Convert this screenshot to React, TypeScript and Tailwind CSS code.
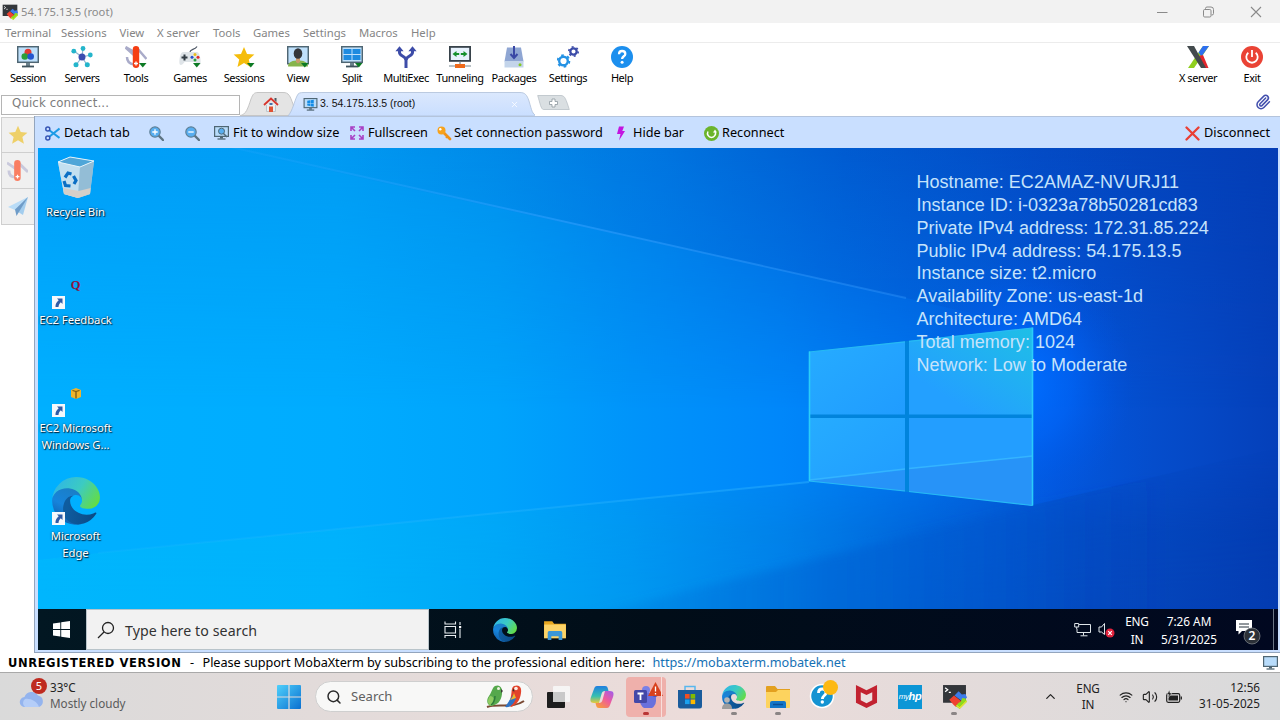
import React from "react";
import { X, Search, Wifi, Volume2, ChevronUp, Paperclip } from "lucide-react";

/* ---------- shared marks ---------- */

function EdgeLogo({ id, className }: { id: string; className: string }) {
  return (
    <svg viewBox="4 5 257 257" className={className}>
      <defs>
        <linearGradient id={id + "a"} x1="0.1" y1="0.5" x2="1" y2="0.6">
          <stop offset="0" stopColor="#0f5c9f" />
          <stop offset="1" stopColor="#0b4a86" />
        </linearGradient>
        <linearGradient id={id + "b"} x1="0.7" y1="0.1" x2="0.3" y2="1">
          <stop offset="0" stopColor="#1b7ec6" />
          <stop offset="0.5" stopColor="#1684dc" />
          <stop offset="1" stopColor="#0f5ca8" />
        </linearGradient>
        <linearGradient id={id + "c"} x1="0" y1="0.3" x2="1" y2="0.75">
          <stop offset="0" stopColor="#2fb6e6" />
          <stop offset="0.5" stopColor="#3ccbc2" />
          <stop offset="1" stopColor="#66dd3e" />
        </linearGradient>
      </defs>
      <path fill={"url(#" + id + "b)"} d="M110.34 246.34A79.2 79.2 0 0 1 87.6 225a80.72 80.72 0 0 1 29.53-120c3.12-1.47 8.45-4.13 15.54-4a32.35 32.35 0 0 1 25.69 13 31.88 31.88 0 0 1 6.36 18.66c0-.21 24.46-79.6-80-79.6-43.9 0-80 41.66-80 78.21a130.15 130.15 0 0 0 12.11 56 128 128 0 0 0 156.38 67.11 75.55 75.55 0 0 1-62.78-8z" />
      <path fill={"url(#" + id + "a)"} d="M235.68 195.46a93.73 93.73 0 0 1-10.54 4.71 101.87 101.87 0 0 1-35.9 6.46c-47.32 0-88.54-32.55-88.54-74.32A31.48 31.48 0 0 1 117.13 105c-42.8 1.8-53.8 46.4-53.8 72.53 0 73.88 68.09 81.37 82.76 81.37 7.91 0 19.84-2.3 27-4.56l1.31-.44a128.34 128.34 0 0 0 66.6-52.8 4 4 0 0 0-5.32-5.64z" />
      <path fill={"url(#" + id + "c)"} d="M156.94 153.78c-.81 1.05-3.3 2.5-3.3 5.66 0 2.61 1.7 5.12 4.72 7.23 14.38 10 41.49 8.68 41.56 8.68a59.56 59.56 0 0 0 30.27-8.35 61.38 61.38 0 0 0 30.43-52.88c.26-22.41-8-37.31-11.34-43.91C228.09 28.76 182.35 5 132.61 5a128 128 0 0 0-128 126.2c.48-36.54 36.8-66.05 80-66.05 3.5 0 23.46.34 42 10.07 16.34 8.58 24.9 18.94 30.85 29.21 6.18 10.67 7.28 24.15 7.28 29.52s-2.74 13.33-7.8 19.83z" />
    </svg>
  );
}

function MobaLogo({ className }: { className: string }) {
  return (
    <svg viewBox="0 0 24 24" className={className}>
      <rect x="1" y="1" width="22" height="17" fill="#33363a" />
      <path d="M3 3.5l2.5 2L3 7.5M6.5 8h2" stroke="#fff" strokeWidth="1.2" fill="none" />
      <path d="M12 11l4-4 3 3 3.500-.5 1.500 3.500-4 4z" fill="#3c7bea" />
      <path d="M7 15l4.500-4 3 2.500 4 3-5 5.500-2.500-2z" fill="#ef4130" />
      <path d="M13 21l3-3 2-1 1.500-3.500 3 .5 1.500 3-7 7z" fill="#8edb1c" />
      <path d="M14 20.500l3 2.500 6.500-6.500" stroke="#f0e23a" strokeWidth="1" fill="none" />
    </svg>
  );
}

function StarMark({ className, fill }: { className: string; fill: string }) {
  return (
    <svg viewBox="0 0 22 22" className={className}>
      <path fill={fill} d="M11 .8l3 6.900 7.400.7-5.600 4.900 1.700 7.400L11 16.900l-6.500 3.800 1.700-7.400L.6 8.400 8 7.700z" />
    </svg>
  );
}

function KnifeMark({ className, body, blade }: { className: string; body: string; blade: string }) {
  return (
    <svg viewBox="0 0 22 22" className={className}>
      <path d="M0 3l9 6M2 11c0 5 3 7 7 7M12 3l10 9.500" stroke={blade} strokeWidth="3" fill="none" />
      <rect x="7.500" y="0" width="6.800" height="22" rx="3.400" fill={body} />
      <path d="M11 15.500v4M9 17.500h4" stroke="#fff" strokeWidth="1.300" />
    </svg>
  );
}

const Drop = () => <path d="M14 17h7.500l-3.700 4.500z" fill="#0d7a24" />;

/* ---------- MobaXterm toolbar icons ---------- */

const ic = "h-[22px] w-[22px]";

function MonitorBase() {
  return (
    <>
      <rect x=".7" y=".7" width="20.600" height="15.600" fill="#bfe0fb" stroke="#4f6673" strokeWidth="1.500" />
      <path d="M9 17h4v3H9z" fill="#6b818c" />
      <path d="M5 20.500h12" stroke="#3f535e" strokeWidth="1.800" />
    </>
  );
}

const toolIcons: Record<string, React.ReactNode> = {
  Session: (
    <svg viewBox="0 0 22 22" className={ic}>
      <MonitorBase />
      <circle cx="11" cy="6.300" r="3.500" fill="#e23a32" />
      <circle cx="7.800" cy="10.500" r="3.300" fill="#2a9f38" />
      <circle cx="13.700" cy="10.500" r="3.300" fill="#2456cf" />
    </svg>
  ),
  Servers: (
    <svg viewBox="0 0 22 22" className={ic}>
      <path d="M11 11L12 2M11 11l8.500-2M11 11l5 8M11 11l-6 8M11 11L3 5" stroke="#8fb4cf" strokeWidth="1.200" />
      <circle cx="11" cy="11" r="3.500" fill="#3c4db0" />
      <g fill="#24b5cb">
        <circle cx="12" cy="2.500" r="2.400" /><circle cx="19.300" cy="9" r="2.400" /><circle cx="16.300" cy="18.800" r="2.500" />
        <circle cx="5" cy="18.800" r="2.500" /><circle cx="2.800" cy="5.200" r="2.400" />
      </g>
    </svg>
  ),
  Tools: (
    <svg viewBox="0 0 22 22" className={ic}>
      <path d="M.5 1.500l9 8M.5 1l8 4.500M2 11c0 5 3 7 7 7.500M12 2l9.500 11" stroke="#a9abc9" strokeWidth="2.500" fill="none" />
      <rect x="7.800" y="0" width="6.400" height="22" rx="3.200" fill="#f53d12" />
      <path d="M11 15.500v4M9 17.500h4" stroke="#fff" strokeWidth="1.300" />
      <Drop />
    </svg>
  ),
  Games: (
    <svg viewBox="0 0 22 22" className={ic}>
      <path d="M11 6c0-3 5-2 7-5.500" stroke="#4b5563" strokeWidth="1.200" fill="none" />
      <path d="M4 6h14c3 0 4 9 3.500 11.500-.5 2.500-3 1.500-5-1.500h-11c-2 3-4.500 4-5 1.500C0 15 1 6 4 6z" fill="#dfe4e8" />
      <path d="M5.500 8.500v6M2.500 11.500h6" stroke="#333c44" strokeWidth="2" />
      <circle cx="16" cy="8.500" r="1.500" fill="#eabf1b" /><circle cx="13" cy="11.300" r="1.500" fill="#2350c8" />
      <circle cx="19" cy="11.300" r="1.500" fill="#e02b2b" /><circle cx="16" cy="14" r="1.500" fill="#259f3d" />
      <Drop />
    </svg>
  ),
  Stars: (
    <svg viewBox="0 0 22 22" className={ic}>
      <path fill="#f5bd0c" d="M11 1l3 6.900 7.400.7-5.600 4.900 1.700 7.400L11 17.100l-6.500 3.800 1.700-7.400L.6 8.600 8 7.900z" />
      <Drop />
    </svg>
  ),
  View: (
    <svg viewBox="0 0 22 22" className={ic}>
      <rect x=".7" y=".7" width="20.600" height="17" fill="#bfe0fb" stroke="#4f6673" strokeWidth="1.500" />
      <path d="M1 20.500c0-5 5-6 10-6s10 1 10 6z" fill="#86b44c" />
      <path d="M9 11h4v5l-2 1.500L9 16z" fill="#c99b6e" />
      <ellipse cx="11" cy="7.500" rx="4.300" ry="5.300" fill="#33363a" />
      <Drop />
    </svg>
  ),
  Split: (
    <svg viewBox="0 0 22 22" className={ic}>
      <MonitorBase />
      <path d="M2.500 3h8v5h-8zM11.500 3h8v5h-8zM2.500 9h8v5h-8zM11.500 9h8v5h-8z" fill="#1e8be0" />
      <Drop />
    </svg>
  ),
  MultiExec: (
    <svg viewBox="0 0 22 22" className={ic}>
      <path d="M4.500 3v3.500c0 4 6.500 3 6.500 8V22M17.500 3v3.500c0 4-6.500 3-6.500 8" stroke="#3d4ca8" strokeWidth="3" fill="none" />
      <path d="M.4 5.200L4.500.3 8.600 5.200zM13.400 5.200L17.500.3 21.600 5.200z" fill="#3d4ca8" />
    </svg>
  ),
  Tunneling: (
    <svg viewBox="0 0 22 22" className={ic}>
      <rect x=".9" y=".9" width="20.200" height="14" fill="#e6f1fc" stroke="#37424a" strokeWidth="1.800" />
      <path d="M3.500 8l4-3v2h2.700v2H7.500v2zM18.500 8l-4-3v2h-2.700v2h2.700v2z" fill="#14902c" />
      <path d="M11 15.500V18M0 20h22" stroke="#77858d" strokeWidth="1.200" />
      <rect x="6" y="18" width="10" height="4" fill="#ef6a1a" />
    </svg>
  ),
  Packages: (
    <svg viewBox="0 0 22 22" className={ic}>
      <path d="M4 1.500h14l2.500 14h-19z" fill="#8fa6d3" />
      <path d="M1.500 15h19v6.500h-19z" fill="#c3d4ea" />
      <path d="M11 0v11M7.500 8l3.500 4 3.500-4" stroke="#3947a5" strokeWidth="2" fill="none" />
      <circle cx="17" cy="18.800" r="1.500" fill="#86c926" />
    </svg>
  ),
  Settings: (
    <svg viewBox="0 0 22 22" className={ic}>
      <circle cx="6.500" cy="15" r="4.300" fill="none" stroke="#2492e4" strokeWidth="2.400" />
      <circle cx="6.500" cy="15" r="5.900" fill="none" stroke="#2492e4" strokeWidth="1.800" strokeDasharray="2.600 3.580" />
      <circle cx="16.500" cy="5.500" r="3.200" fill="none" stroke="#3b4ba8" strokeWidth="2.300" />
      <circle cx="16.500" cy="5.500" r="4.700" fill="none" stroke="#3b4ba8" strokeWidth="1.600" strokeDasharray="2 2.920" />
    </svg>
  ),
  Help: (
    <svg viewBox="0 0 22 22" className={ic}>
      <circle cx="11" cy="11" r="11" fill="#1c8fee" />
      <path d="M8 8.200C8 6.300 9.300 5 11.100 5s3.200 1.200 3.200 2.900c0 2.300-3.200 2.400-3.200 5" stroke="#fff" strokeWidth="2.300" fill="none" />
      <circle cx="11.100" cy="16.300" r="1.500" fill="#fff" />
    </svg>
  ),
  XServer: (
    <svg viewBox="0 0 22 22" className={ic}>
      <path d="M16 0h6L7 22H1z" fill="#8fcf1e" />
      <path d="M16 0h6l-7.500 10.500-3-4z" fill="#2e6ff0" />
      <path d="M12 10l4-1 5.500 13H17z" fill="#e3262c" />
      <path d="M0 0h7l12 22h-5z" fill="#434a4d" />
    </svg>
  ),
  Exit: (
    <svg viewBox="0 0 22 22" className={ic}>
      <circle cx="11" cy="11" r="11" fill="#ea4335" />
      <path d="M7.300 6.700a5.700 5.700 0 1 0 7.400 0M11 4v7" stroke="#fff" strokeWidth="1.800" fill="none" />
    </svg>
  ),
};

function ToolButton({ icon, label }: { icon: string; label: string }) {
  return (
    <div className="flex w-[54px] flex-col items-center">
      {toolIcons[icon]}
      <span className="mt-[2px] text-[11px] leading-4 tracking-[-0.45px] whitespace-nowrap text-black">{label}</span>
    </div>
  );
}

function MiniMonitor({ className, children }: { className: string; children?: React.ReactNode }) {
  return (
    <svg viewBox="0 0 15 14" className={className}>
      <rect x=".6" y=".6" width="13.800" height="9.800" fill="#b8dcfb" stroke="#4f6673" strokeWidth="1.200" />
      <path d="M6 11h3v1.500H6z" fill="#4f6673" />
      <path d="M3.500 13h8" stroke="#4f6673" strokeWidth="1.300" />
      {children}
    </svg>
  );
}

function ZoomMark({ plus }: { plus?: boolean }) {
  return (
    <svg viewBox="0 0 15 15" className="h-[15px] w-[15px]">
      <path d="M10 10l4 4" stroke="#5d7380" strokeWidth="2.400" strokeLinecap="round" />
      <circle cx="6" cy="6" r="5.200" fill="#58aef0" stroke="#5f8097" strokeWidth="1.200" />
      <path d={plus ? "M3.300 6h5.400M6 3.300v5.400" : "M3.300 6h5.400"} stroke="#fff" strokeWidth="1.300" />
    </svg>
  );
}

/* ---------- header ---------- */

function TitleBar() {
  return (
    <div className="flex h-[23px] items-center bg-[#f2f2f2] pl-[2px]">
      <MobaLogo className="h-4 w-4" />
      <span className="mt-[1px] ml-[3px] text-[11.2px] text-[#8a8a8a]">54.175.13.5 (root)</span>
      <div className="ml-auto flex items-center text-[#8a8a8a]">
        <svg viewBox="0 0 12 12" className="mr-[34px] h-3 w-3">
          <path d="M1 6.500h10.500" stroke="currentColor" />
        </svg>
        <svg viewBox="0 0 12 12" className="mr-[36px] h-3 w-3" fill="none" stroke="currentColor">
          <rect x="1.500" y="3.500" width="7.500" height="7.500" rx="1.200" />
          <path d="M3.500 3V2.500a1.500 1.500 0 0 1 1.500-1.500h4a2.500 2.500 0 0 1 2.500 2.500v4A1.500 1.500 0 0 1 10 9h-.5" />
        </svg>
        <svg viewBox="0 0 12 12" className="mr-[18px] h-3 w-3">
          <path d="M1 1l10 10M11 1L1 11" stroke="currentColor" strokeWidth="1.100" />
        </svg>
      </div>
    </div>
  );
}

function MenuBar() {
  const c = "whitespace-nowrap";
  return (
    <div className="flex h-5 items-center border-b border-[#ececec] bg-white pt-[2px] pl-[5px] text-[11.3px] text-[#858585]">
      <span className={c + " w-[56px]"}>Terminal</span>
      <span className={c + " w-[58.500px]"}>Sessions</span>
      <span className={c + " w-[37.500px]"}>View</span>
      <span className={c + " w-[56px]"}>X server</span>
      <span className={c + " w-[40px]"}>Tools</span>
      <span className={c + " w-[50px]"}>Games</span>
      <span className={c + " w-[56px]"}>Settings</span>
      <span className={c + " w-[52px]"}>Macros</span>
      <span className={c}>Help</span>
    </div>
  );
}

function ToolBar() {
  return (
    <div className="flex h-[49px] justify-between bg-white pr-[1px] pl-[1px] pt-[3px]">
      <div className="flex">
        <ToolButton icon="Session" label="Session" />
        <ToolButton icon="Servers" label="Servers" />
        <ToolButton icon="Tools" label="Tools" />
        <ToolButton icon="Games" label="Games" />
        <ToolButton icon="Stars" label="Sessions" />
        <ToolButton icon="View" label="View" />
        <ToolButton icon="Split" label="Split" />
        <ToolButton icon="MultiExec" label="MultiExec" />
        <ToolButton icon="Tunneling" label="Tunneling" />
        <ToolButton icon="Packages" label="Packages" />
        <ToolButton icon="Settings" label="Settings" />
        <ToolButton icon="Help" label="Help" />
      </div>
      <div className="flex">
        <ToolButton icon="XServer" label="X server" />
        <ToolButton icon="Exit" label="Exit" />
      </div>
    </div>
  );
}

function TabRow() {
  return (
    <div className="flex h-[24px] items-end bg-white">
      <div className="mb-[1px] ml-[1px] flex h-5 w-[239px] items-center self-end border border-[#b5b5b5] pb-[2px] pl-[10px] font-['DejaVu_Sans'] text-[11.8px] tracking-[0.1px] text-[#7c7c7c]">
        Quick connect...
      </div>
      <div className="relative flex h-6 w-[295px] items-center">
        <svg viewBox="0 0 295 24" className="absolute inset-0 h-6 w-[295px]">
          <defs>
            <linearGradient id="tabActive" x1="0" y1="0" x2="0" y2="1">
              <stop offset="0" stopColor="#dbe8fd" />
              <stop offset="1" stopColor="#c9deff" />
            </linearGradient>
          </defs>
          <path d="M0 23.500C6 23 8 16 11 7C13 2 14 .5 18 .5H43C49 .5 50 4 53 12L56 23.500z" fill="#e4e4e4" stroke="#c6c6c6" />
          <path d="M48 24C53 18 54 10 57 4C58 1 60 .5 64 .5H280C285 .5 287 3 289 9C292 19 292 22 297 24z" fill="url(#tabActive)" stroke="#adbfd8" strokeWidth=".8" />
        </svg>
        <svg viewBox="0 0 16 15" className="relative ml-[23px] h-[15px] w-4">
          <path d="M3 7h10v8H3z" fill="#eceff1" />
          <path d="M1 8l7-6.500L15 8" stroke="#d8342c" strokeWidth="1.800" fill="none" />
          <path d="M11.500 1h2v4l-2-2z" fill="#4b5a62" />
          <path d="M3.500 8v6.500h9V8" stroke="#b3bcc2" strokeWidth=".8" fill="none" />
          <path d="M6 9.500h4V15H6z" fill="#e05233" />
          <path d="M6.500 6h3v2h-3z" fill="#4a6fa8" />
        </svg>
        <MiniMonitor className="relative ml-[24px] h-[13px] w-[15px]">
          <path d="M4 3l3-.6v2.900H4zM7.500 2.300L11 1.800v3.500H7.500zM4 5.800h3v2.800L4 8zM7.500 5.800H11v3.600l-3.500-.6z" fill="#128be6" />
        </MiniMonitor>
        <span className="relative ml-[2px] font-['Liberation_Sans'] text-[10.5px] text-[#111]">3. 54.175.13.5 (root)</span>
        <X className="relative ml-[95px] h-[9px] w-[9px] text-white" strokeWidth={2} />
      </div>
      <svg viewBox="0 0 33 15" className="mb-[6px] ml-[2px] h-[15px] w-[33px]">
        <path d="M.7.500H24c4 0 5 4 8.300 14H6.500C4 14.500 3 8 .7.500z" fill="#dadfe2" stroke="#b9c0c6" strokeWidth=".8" />
        <path d="M15 4h3v2.500h2.500v3H18V12h-3V9.500h-2.500v-3H15z" fill="#fff" stroke="#8d989f" strokeWidth=".8" />
      </svg>
      <Paperclip className="mr-[9px] mb-[6px] ml-auto h-4 w-4 text-[#4350ae]" strokeWidth={2.300} />
    </div>
  );
}

/* ---------- session panel ---------- */

function SideStrip() {
  const cell = "flex h-9 w-[33px] items-center justify-center border-b border-l border-[#cfcfcf] bg-[#f0f0f0] pr-[1px]";
  return (
    <div className="flex w-[34px] flex-col bg-white pt-[1px] pl-[1px]">
      <div className={cell + " border-t"}><StarMark fill="#eed069" className="h-5 w-5" /></div>
      <div className={cell}><KnifeMark body="#fa7e62" blade="#c9c9dc" className="h-[21px] w-[21px]" /></div>
      <div className={cell}>
        <svg viewBox="0 0 22 22" className="h-[22px] w-[22px]">
          <path d="M1 11L21 1 8 14z" fill="#b9dcf7" />
          <path d="M8 14L21 1 16 19z" fill="#a3cdee" />
          <path d="M8 13.500L21 1 9.500 20z" fill="#6f9cc8" />
        </svg>
      </div>
    </div>
  );
}

function ActionBar() {
  return (
    <div className="flex h-8 items-center border-t border-[#b4c4dc] pt-[1px] pl-[10px] text-[12.7px] whitespace-nowrap text-black">
      <svg viewBox="0 0 15 15" className="h-[15px] w-[15px]">
        <path d="M4 4l10.500 8M4 11L14.500 2.500" stroke="#1d9be6" strokeWidth="2" />
        <circle cx="2.800" cy="3" r="2" fill="none" stroke="#3655b5" strokeWidth="1.500" />
        <circle cx="2.800" cy="12" r="2" fill="none" stroke="#3655b5" strokeWidth="1.500" />
      </svg>
      <span className="ml-[4px] w-[85px] tracking-[0.1px]">Detach tab</span>
      <ZoomMark plus />
      <span className="w-[21px]" />
      <ZoomMark />
      <span className="w-[14px]" />
      <MiniMonitor className="h-[14px] w-[15px]">
        <circle cx="7.500" cy="5.200" r="3" fill="#58aef0" stroke="#506a7a" />
        <path d="M9.500 7.500L13 11" stroke="#506a7a" strokeWidth="1.500" />
      </MiniMonitor>
      <span className="ml-[4px] w-[117px] tracking-[0.06px]">Fit to window size</span>
      <svg viewBox="0 0 14 14" className="h-[14px] w-[14px]">
        <path d="M1 5V1h4M9 1h4v4M13 9v4H9M5 13H1V9M1 1l4 4M13 1L9 5M13 13L9 9M1 13l4-4" stroke="#a93fc4" strokeWidth="1.600" fill="none" />
      </svg>
      <span className="ml-[4px] w-[69px] tracking-[-0.05px]">Fullscreen</span>
      <svg viewBox="0 0 15 15" className="h-[15px] w-[15px]">
        <path d="M6 6l7 7" stroke="#f09217" strokeWidth="2.800" strokeLinecap="round" />
        <path d="M10 10.500l-1 1.500" stroke="#f09217" strokeWidth="1.500" />
        <circle cx="4.500" cy="4.500" r="4" fill="#f6a21c" />
        <circle cx="3.300" cy="3.300" r="1.200" fill="#fff" />
      </svg>
      <span className="ml-[2px] w-[162px]">Set connection password</span>
      <svg viewBox="0 0 10 15" className="h-[15px] w-[10px]">
        <path d="M3 .5h5L6.300 5H9L3 14.500 4.500 8H1z" fill="#c315e0" />
      </svg>
      <span className="ml-[7px] w-[71px]">Hide bar</span>
      <svg viewBox="0 0 15 15" className="h-[15px] w-[15px]">
        <circle cx="7.500" cy="7.500" r="7.500" fill="#6bb42c" />
        <path d="M4 5.500a4 4 0 1 0 7 0" stroke="#fff" strokeWidth="1.500" fill="none" />
        <path d="M9 6.500l2-3 2 3z" fill="#fff" />
      </svg>
      <span className="ml-[3px]">Reconnect</span>
      <svg viewBox="0 0 15 15" className="ml-auto h-[15px] w-[15px]">
        <path d="M1.500 1.500l12 12M13.500 1.500l-12 12" stroke="#e93f34" strokeWidth="2.300" strokeLinecap="round" />
      </svg>
      <span className="mr-[10px] ml-[4px]">Disconnect</span>
    </div>
  );
}

function Wallpaper() {
  return (
    <svg viewBox="0 0 1240 461" preserveAspectRatio="none" className="absolute inset-0 h-full w-full">
      <defs>
        <linearGradient id="base" x1="0" y1="0" x2="1240" y2="0" gradientUnits="userSpaceOnUse">
          <stop offset="0" stopColor="#00b0ff" />
          <stop offset="0.240" stopColor="#00acff" />
          <stop offset="0.370" stopColor="#00a4fc" />
          <stop offset="0.480" stopColor="#0094fa" />
          <stop offset="0.600" stopColor="#0087fa" />
          <stop offset="0.720" stopColor="#0074f2" />
          <stop offset="0.820" stopColor="#0258de" />
          <stop offset="0.900" stopColor="#054dcc" />
          <stop offset="1" stopColor="#0540ba" />
        </linearGradient>
        <linearGradient id="top" x1="0" y1="0" x2="1240" y2="0" gradientUnits="userSpaceOnUse">
          <stop offset="0" stopColor="#009ff9" />
          <stop offset="0.240" stopColor="#009cf4" />
          <stop offset="0.370" stopColor="#0090ec" />
          <stop offset="0.500" stopColor="#007be4" />
          <stop offset="0.650" stopColor="#005dd2" />
          <stop offset="0.800" stopColor="#034bc4" />
          <stop offset="1" stopColor="#043db5" />
        </linearGradient>
        <linearGradient id="low" x1="0" y1="0" x2="1240" y2="0" gradientUnits="userSpaceOnUse">
          <stop offset="0" stopColor="#00b6fd" />
          <stop offset="0.240" stopColor="#00b3fb" />
          <stop offset="0.370" stopColor="#00a8f6" />
          <stop offset="0.480" stopColor="#0098f0" />
          <stop offset="0.600" stopColor="#0080e6" />
          <stop offset="0.720" stopColor="#0060d4" />
          <stop offset="0.850" stopColor="#044ac0" />
          <stop offset="1" stopColor="#033bb0" />
        </linearGradient>
        <linearGradient id="fadeDown" x1="0" y1="0" x2="0" y2="1">
          <stop offset="0" stopColor="#fff" />
          <stop offset="1" stopColor="#000" />
        </linearGradient>
        <linearGradient id="fadeUp" x1="0" y1="0" x2="0" y2="1">
          <stop offset="0" stopColor="#000" />
          <stop offset="0.500" stopColor="#ccc" />
          <stop offset="1" stopColor="#fff" />
        </linearGradient>
        <mask id="topMask"><rect width="1240" height="260" fill="url(#fadeDown)" /></mask>
        <mask id="lowMask"><rect y="300" width="1240" height="161" fill="url(#fadeUp)" /></mask>
        <linearGradient id="wedge" x1="200" y1="0" x2="1100" y2="0" gradientUnits="userSpaceOnUse">
          <stop offset="0" stopColor="#0074d8" stopOpacity="0" />
          <stop offset="0.450" stopColor="#0064d4" stopOpacity=".25" />
          <stop offset="0.750" stopColor="#0054cc" stopOpacity=".35" />
          <stop offset="1" stopColor="#0048c8" stopOpacity="0" />
        </linearGradient>
        <linearGradient id="under" x1="500" y1="0" x2="1240" y2="0" gradientUnits="userSpaceOnUse">
          <stop offset="0" stopColor="#0078dc" stopOpacity=".1" />
          <stop offset="0.400" stopColor="#0060d2" stopOpacity=".55" />
          <stop offset="0.650" stopColor="#004fc8" stopOpacity=".3" />
          <stop offset="0.850" stopColor="#0339ae" stopOpacity="0" />
        </linearGradient>
        <linearGradient id="ray1" x1="200" y1="0" x2="870" y2="0" gradientUnits="userSpaceOnUse">
          <stop offset="0" stopColor="#2aa8ff" stopOpacity=".2" />
          <stop offset="0.500" stopColor="#2fa0ff" stopOpacity=".6" />
          <stop offset="1" stopColor="#3a9cff" stopOpacity=".35" />
        </linearGradient>
        <linearGradient id="ray2" x1="60" y1="0" x2="771" y2="0" gradientUnits="userSpaceOnUse">
          <stop offset="0" stopColor="#36c0ff" stopOpacity=".1" />
          <stop offset="1" stopColor="#2fb4ff" stopOpacity=".45" />
        </linearGradient>
        <radialGradient id="flare" cx="0.500" cy="0.500" r="0.500">
          <stop offset="0" stopColor="#006eff" />
          <stop offset="0.450" stopColor="#0066fa" stopOpacity=".65" />
          <stop offset="1" stopColor="#0055e6" stopOpacity="0" />
        </radialGradient>
        <linearGradient id="paneBright" x1="0.300" y1="0.800" x2="1" y2="0">
          <stop offset="0" stopColor="#23a0ff" />
          <stop offset="1" stopColor="#1fbfe6" />
        </linearGradient>
        <linearGradient id="pane" x1="0" y1="0" x2="1" y2="1">
          <stop offset="0" stopColor="#26acff" />
          <stop offset="1" stopColor="#209cff" />
        </linearGradient>
        <filter id="soft" x="-10%" y="-10%" width="120%" height="120%"><feGaussianBlur stdDeviation="5" /></filter>
      </defs>
      <rect width="1240" height="461" fill="url(#base)" />
      <rect width="1240" height="260" fill="url(#top)" mask="url(#topMask)" />
      <path d="M188 0H1240V236L1000 181L868 150z" fill="url(#wedge)" />
      <path d="M0 412L60 405L771 334L995 357L1240 300V461H0z" fill="url(#low)" mask="url(#lowMask)" />
      <path d="M995 357L500 480H1260V300z" fill="url(#under)" filter="url(#soft)" />
      <ellipse cx="985" cy="235" rx="110" ry="125" fill="url(#flare)" />
      <path d="M188 -2L868 150" stroke="url(#ray1)" strokeWidth="1.800" />
      <path d="M60 405L771 334" stroke="url(#ray2)" strokeWidth="2" />
      <path d="M771 203.500L994.500 179.500V357.500L771 333z" fill="#0184dc" />
      <path d="M771 204L867 193.800V266.500H771z" fill="url(#pane)" />
      <path d="M871 193L994.500 180V266.500H871z" fill="url(#paneBright)" />
      <path d="M771 270H867V343L771 333z" fill="url(#pane)" />
      <path d="M871 270H994.500V357.500L871 343.500z" fill="#239eff" />
      <path d="M771 333L867 322V343zM871 321L994.500 308V357.500L871 343.500z" fill="#2a8ff5" fillOpacity=".7" />
      <path d="M771 332L867 321M871 320.500L994.500 308" stroke="#34b4ff" strokeWidth="1.500" />
      <path d="M771 204L867 193.800M871 193.300L994.500 180M771 333L867 343M871 343.500L994.500 357.500" stroke="#27b9f5" strokeWidth="1.200" />
      <path d="M771.500 203.500V333M994.500 179.500V357.500" stroke="#2bcdf8" strokeWidth="1.600" />
    </svg>
  );
}

function ShortcutArrow() {
  return (
    <svg viewBox="0 0 13 13" className="absolute bottom-0 left-0 h-[13px] w-[13px]">
      <rect width="13" height="13" fill="#f5f8fb" />
      <path d="M5 2.500h5.500V8L8.800 6.300C7 8 6.800 9 6.500 11H3.500C3.300 8 4.500 6 6.700 4.200z" fill="#2f5ba6" />
    </svg>
  );
}

function DesktopIcon({ children, shortcut, lines }: { children?: React.ReactNode; shortcut?: boolean; lines: string[] }) {
  return (
    <div className="flex h-[108px] w-[77px] flex-col items-center">
      <div className="relative flex h-[48px] w-[48px] items-center justify-center">
        {children}
        {shortcut && <ShortcutArrow />}
      </div>
      <div className="mt-[3px] text-center text-[11.3px] leading-[16.500px] tracking-[-0.05px] whitespace-nowrap text-white [text-shadow:1px_1px_1px_#00263f,0_0_2px_#003a5c]">
        {lines.map((l) => (
          <div key={l}>{l}</div>
        ))}
      </div>
    </div>
  );
}

function RecycleBin() {
  return (
    <svg viewBox="0 0 40 44" className="mt-[1px] h-[44px] w-10">
      <path d="M2 6L14 1l24 4-4 33-12 4L8 38z" fill="#a9cfe6" />
      <path d="M2 6L14 1l24 4-14 6z" fill="#4fa6d8" />
      <path d="M2 6l22 5-2 31L8 38z" fill="#c3e0f0" />
      <path d="M24 11l14-6-4 33-12 4z" fill="#93bdd6" />
      <path d="M7.200 32L22.600 35 34.600 32 34 38l-12 4L8 38z" fill="#d5cfc9" />
      <path d="M2 6L14 1l24 4-14 6z" fill="none" stroke="#e4f3fb" strokeWidth="1" />
      <g fill="none" stroke="#0b6fc4" strokeWidth="3.200">
        <path d="M9 21.500l3-4.500 3.500 1" /><path d="M17.500 20l2.500 4.500-2 3.500" /><path d="M14.500 30l-5-.5-1.500-4.500" />
      </g>
    </svg>
  );
}

const hostInfo = [
  "Hostname: EC2AMAZ-NVURJ11",
  "Instance ID: i-0323a78b50281cd83",
  "Private IPv4 address: 172.31.85.224",
  "Public IPv4 address: 54.175.13.5",
  "Instance size: t2.micro",
  "Availability Zone: us-east-1d",
  "Architecture: AMD64",
  "Total memory: 1024",
  "Network: Low to Moderate",
];

function FolderMark({ className }: { className: string }) {
  return (
    <svg viewBox="0 0 24 22" className={className}>
      <path d="M0 1.500h9l2 2.500h13v16H0z" fill="#e9a820" />
      <path d="M0 5h24v15H0z" fill="#fdd468" />
      <path d="M4 22v-8c0-1.500 1-2 2-2h12c1 0 2 .5 2 2v8h-4v-4H8v4z" fill="#3b97d8" />
    </svg>
  );
}

function RemoteDesktop() {
  return (
    <div className="relative h-[461px] overflow-hidden">
      <Wallpaper />
      <div className="relative flex h-full justify-between">
        <div className="-ml-[1px] flex flex-col pt-[5px]">
          <DesktopIcon lines={["Recycle Bin"]}><RecycleBin /></DesktopIcon>
          <DesktopIcon shortcut lines={["EC2 Feedback"]}>
            <span className="font-['Liberation_Serif'] text-[12.500px] leading-none font-bold text-[#8b1442]">Q</span>
          </DesktopIcon>
          <DesktopIcon shortcut lines={["EC2 Microsoft", "Windows G..."]}>
            <svg viewBox="0 0 10 11" className="h-[11px] w-[10px]">
              <path d="M0 2l5-2 5 2v7l-5 2-5-2z" fill="#f0b429" />
              <path d="M1.500 2.500L5 3.500l3.500-1M5 3.500v7" stroke="#6f5416" strokeWidth="1.200" fill="none" />
            </svg>
          </DesktopIcon>
          <DesktopIcon shortcut lines={["Microsoft", "Edge"]}><EdgeLogo id="desk" className="h-12 w-12" /></DesktopIcon>
        </div>
        <div className="w-[361.500px] pt-[23px] font-['Liberation_Sans'] text-[18px] leading-[22.850px] tracking-[0.03px] whitespace-nowrap text-[#c6e3fb]">
          {hostInfo.map((l) => (
            <div key={l}>{l}</div>
          ))}
        </div>
      </div>
    </div>
  );
}

function RemoteTaskbar() {
  return (
    <div className="flex h-[41px] items-stretch bg-linear-to-r from-[#021722] via-[#010d18] to-[#010820] text-[11.8px] text-white">
      <div className="flex w-12 items-center justify-center pr-[1px]">
        <svg viewBox="0 0 17 17" className="h-[17px] w-[17px]">
          <path d="M0 2.400L7.300 1.400v6.700H0zM8.200 1.300L17 0v8.100H8.200zM0 9h7.300v6.600L0 14.600zM8.200 9H17v8l-8.800-1.200z" fill="#fff" />
        </svg>
      </div>
      <div className="flex w-[343px] items-center border border-[#b9c4ca] bg-[#f2f2f2] pl-[10px] text-[14.2px] text-[#333]">
        <svg viewBox="0 0 18 18" className="mr-[10px] h-[18px] w-[18px]">
          <circle cx="11" cy="7" r="5.500" fill="none" stroke="#222" strokeWidth="1.300" />
          <path d="M7 11l-6 6" stroke="#222" strokeWidth="1.300" />
        </svg>
        <span className="mt-[2px] tracking-[0.08px]">Type here to search</span>
      </div>
      <div className="flex items-center pl-[15px]">
        <svg viewBox="0 0 18 18" className="h-[18px] w-[18px]">
          <path d="M1 .5v2.500h10.500V.5M1 17v-2.500h10.500V17M1 5.500h10.500v6.500H1zM16 1v3M16 7.500V17" stroke="#e8edf0" strokeWidth="1.100" fill="none" />
          <path d="M15 5h2.200v2H15z" fill="#fff" />
        </svg>
        <EdgeLogo id="rtb" className="ml-[31px] h-6 w-6" />
        <FolderMark className="ml-[27px] h-5 w-[22px]" />
      </div>
      <div className="ml-auto flex items-center">
        <svg viewBox="0 0 17 15" className="h-[15px] w-[17px]">
          <path d="M5 2.500h11.500v8H3V7M9.500 10.500v3M6.500 13.800h7M.7 1.500h4v3.500h-4zM2.700 5v2" stroke="#dfe5e9" strokeWidth="1" fill="none" />
        </svg>
        <svg viewBox="0 0 17 16" className="ml-[7px] h-4 w-[17px]">
          <path d="M1 5h2.500L6.500 1.500v11L3.500 10H1z" stroke="#dfe5e9" strokeWidth="1" fill="none" />
          <circle cx="12" cy="11" r="4.500" fill="#e0223c" />
          <path d="M10.200 9.200l3.600 3.600M13.800 9.200l-3.600 3.600" stroke="#fff" strokeWidth="1.200" />
        </svg>
        <div className="ml-[8px] w-[28px] text-center leading-[18px] tracking-[-0.2px]">
          <div>ENG</div>
          <div>IN</div>
        </div>
        <div className="ml-[7px] w-[62px] text-center leading-[18px] whitespace-nowrap">
          <div>7:26 AM</div>
          <div>5/31/2025</div>
        </div>
        <svg viewBox="0 0 26 26" className="mt-[4px] ml-[16px] h-[26px] w-[26px]">
          <path d="M0 1h16v11H6l-3.500 3.500V12H0z" fill="#fff" />
          <path d="M3 5h10M3 8h10" stroke="#25303a" strokeWidth="1" />
          <circle cx="16" cy="17" r="8" fill="#2c3138" stroke="#7a8087" strokeWidth=".8" />
          <text x="16" y="21.300" textAnchor="middle" fontSize="12" fontWeight="600" fontFamily="Noto Sans, sans-serif" fill="#fff">2</text>
        </svg>
        <div className="ml-[11px] h-[41px] w-[5px] border-l border-[#6b7686]" />
      </div>
    </div>
  );
}

/* ---------- host chrome ---------- */

function StatusBar() {
  return (
    <div className="flex h-5 items-center border-b border-[#a9a9a9] bg-white pt-[1px] pr-[2px] pl-[8px] text-[12.700px] whitespace-nowrap text-black">
      <span className="w-[182px] font-['DejaVu_Sans_Condensed'] text-[12.800px] font-bold tracking-[0.6px]">UNREGISTERED VERSION</span>
      <span className="w-[12.500px]">-</span>
      <span className="w-[450px] tracking-[-0.05px]">Please support MobaXterm by subscribing to the professional edition here:</span>
      <span className="text-[#1571b5]">https://mobaxterm.mobatek.net</span>
      <MiniMonitor className="ml-auto h-[14px] w-[15px]" />
    </div>
  );
}

function Parrots() {
  return (
    <svg viewBox="0 0 40 26" className="h-[26px] w-10">
      <path d="M2 23c10-4 26 2 37-6" stroke="#7a4a34" strokeWidth="2" fill="none" />
      <path d="M10 2c5-2 8 2 7 8-1 8-5 11-11 12-4-1-5-6-2-10 3-4 3-8 6-10z" fill="#55a84c" />
      <path d="M5 12c4 0 5 4 2 10-5-1-5-6-2-10z" fill="#8ecb62" />
      <path d="M10 12c0 4-2 8-4 9" stroke="#2d7b3a" strokeWidth="1.500" fill="none" />
      <circle cx="13.500" cy="4.500" r="1.500" fill="#f0f3e2" />
      <path d="M16 5l2 2-2 2z" fill="#3a3a36" />
      <path d="M29 2c5-2 8 1 7 7-1 8-5 12-10 14-2-2-1-6 0-11 1-4 0-8 3-10z" fill="#e2432b" />
      <path d="M28 11c-3 4-5 8-8 12 5 1 9-3 11-9z" fill="#2f72c4" />
      <path d="M29 9c-1 3-2 5-4 7l6-2z" fill="#f3b62b" />
      <circle cx="31" cy="4.500" r="1.800" fill="#fbeee6" />
      <path d="M28.500 4l-1 3 2 .5z" fill="#33302c" />
    </svg>
  );
}

function Cell({ children, dot, className = "" }: { children: React.ReactNode; dot?: string; className?: string }) {
  return (
    <div className={"relative flex h-[40px] w-[44px] items-center justify-center " + className}>
      {children}
      {dot && <span className={"absolute bottom-[2px] left-[19px] h-[3px] w-[6px] rounded-full " + dot} />}
    </div>
  );
}

function HostTaskbar() {
  return (
    <div className="flex h-[47px] items-center bg-linear-to-r from-[#dadada] via-[#ecdcda] via-55% to-[#d9dadb] text-[11.7px] whitespace-nowrap text-[#222]">
      <div className="relative mt-[5px] ml-[19px] h-[30px] w-[28px] self-start">
        <svg viewBox="0 0 26 18" className="absolute bottom-0 left-0 h-[18px] w-[26px]">
          <path d="M6 17a5 5 0 0 1-.5-10A7.500 7.500 0 0 1 19 5.500 6 6 0 0 1 20 17z" fill="#94b4ee" />
          <path d="M6 17a5 5 0 0 1 0-8c5-1 12 2 14 8z" fill="#b4cdf8" />
        </svg>
        <span className="absolute top-0 left-[12px] flex h-4 w-4 items-center justify-center rounded-full bg-[#bf2b20] text-[11px] text-white">5</span>
      </div>
      <div className="-mt-[3px] ml-[3px] w-[227px] leading-4">
        <div>33°C</div>
        <div className="text-[#5a5a5a]">Mostly cloudy</div>
      </div>
      <svg viewBox="0 0 24 24" className="h-6 w-6">
        <defs>
          <linearGradient id="win" x1="0" y1="0" x2="1" y2="1">
            <stop offset="0" stopColor="#4fd0fb" />
            <stop offset="1" stopColor="#0a6fd0" />
          </linearGradient>
        </defs>
        <path d="M0 1a1 1 0 0 1 1-1h10.400v11.400H0zM12.600 0H23a1 1 0 0 1 1 1v10.400H12.600zM0 12.600h11.400V24H1a1 1 0 0 1-1-1zM12.600 12.600H24V23a1 1 0 0 1-1 1H12.600z" fill="url(#win)" />
      </svg>
      <div className="ml-[14px] flex h-[31px] w-[218px] items-center rounded-full border border-[#cfcfcf] bg-[#f8f8f7] pl-[10px] text-[13.1px] text-[#606060]">
        <Search className="mr-[9px] h-4 w-4 text-[#2a2a2a]" strokeWidth={2.200} />
        Search
        <div className="mr-[7px] ml-auto"><Parrots /></div>
      </div>
      <Cell className="ml-[3px]">
        <svg viewBox="0 0 24 24" className="h-6 w-6">
          <rect x="1" y="7" width="18" height="16" rx="1" fill="#1d1d1d" />
          <rect x="7" y="1" width="17" height="16" rx="1" fill="#f6f6f6" fillOpacity=".92" />
          <rect x="7" y="7" width="12" height="10" fill="#c9c9c9" />
        </svg>
      </Cell>
      <Cell>
        <svg viewBox="0 0 24 24" className="h-6 w-6">
          <defs>
            <linearGradient id="cpa" x1="0" y1="0" x2="0" y2="1">
              <stop offset="0" stopColor="#1f7fe0" /><stop offset=".6" stopColor="#36c0b0" /><stop offset="1" stopColor="#e8c93a" />
            </linearGradient>
            <linearGradient id="cpb" x1="1" y1="0" x2="0.200" y2="1">
              <stop offset="0" stopColor="#9c5cf0" /><stop offset=".5" stopColor="#ee5b9c" /><stop offset="1" stopColor="#f79c3c" />
            </linearGradient>
          </defs>
          <path d="M7 1h8c2 0 2.500 1 3 3l.5 2H15c-2 0-3 1-3.500 3L9 18H4c-4 0-4-3-3-6L4 4c.6-2 1.500-3 3-3z" fill="url(#cpa)" />
          <path d="M17 23H9c-2 0-2.500-1-3-3l-.5-2H9c2 0 3-1 3.500-3L15 6h5c4 0 4 3 3 6l-3 8c-.6 2-1.500 3-3 3z" fill="url(#cpb)" />
        </svg>
      </Cell>
      <div className="flex h-[40px] w-[44px] items-center pl-[2px]">
        <div className="relative flex h-[40px] w-[40px] shrink-0 items-center justify-center rounded-[4px] bg-[#efb0ab] pl-[3px]">
          <svg viewBox="0 0 30 26" className="mb-[3px] h-[26px] w-[30px] shrink-0">
            <circle cx="13" cy="8" r="4" fill="#7a80e6" />
            <path d="M7 11h16v8a6 6 0 0 1-16 0z" fill="#6a70dc" />
            <circle cx="22" cy="12" r="3" fill="#4f55b8" />
            <rect x="1" y="8" width="13" height="13" rx="1.500" fill="#4448a8" />
            <path d="M4.500 11.500h6M7.500 11.500V18" stroke="#fff" strokeWidth="1.800" />
            <path d="M22.500 0L30 14H15z" fill="#d8401d" />
            <path d="M22.500 4.500v5M22.500 11v1.500" stroke="#fff" strokeWidth="1.300" />
          </svg>
          <span className="absolute bottom-[2px] left-[17px] h-[3px] w-[6px] rounded-full bg-[#b93535]" />
          <span className="absolute top-0 left-[35px] h-[40px] w-px bg-[#f9dedb]" />
        </div>
      </div>
      <Cell>
        <svg viewBox="0 0 24 24" className="h-6 w-6">
          <path d="M7 5V1.500h10V5" stroke="#58b7ee" strokeWidth="1.500" fill="none" />
          <path d="M0 5h24v16a2.500 2.500 0 0 1-2.500 2.500h-19A2.500 2.500 0 0 1 0 21z" fill="#1a5c9c" />
          <path d="M7 9h4.600v4.600H7z" fill="#ef4f23" /><path d="M12.600 9h4.600v4.600h-4.600z" fill="#80bb00" />
          <path d="M7 14.500h4.600v4.600H7z" fill="#1ba1ef" /><path d="M12.600 14.500h4.600v4.600h-4.600z" fill="#fdb900" />
        </svg>
      </Cell>
      <Cell dot="bg-[#8a8585]">
        <EdgeLogo id="htb" className="h-6 w-6" />
        <svg viewBox="0 0 10 12" className="absolute bottom-[8px] left-[10px] h-3 w-[10px]">
          <circle cx="5" cy="3" r="2.800" fill="#b4b4b4" /><path d="M0 12c0-4 2-5.500 5-5.500S10 8 10 12z" fill="#9d9d9d" />
        </svg>
      </Cell>
      <Cell dot="bg-[#8a8585]">
        <svg viewBox="0 0 24 24" className="h-6 w-6">
          <path d="M0 2a1 1 0 0 1 1-1h8l2.500 3H24v18H0z" fill="#e3a01f" />
          <path d="M0 7h10l2-2h12v17a1 1 0 0 1-1 1H1a1 1 0 0 1-1-1z" fill="#fdd35e" />
          <path d="M4 23v-5a2 2 0 0 1 2-2h12a2 2 0 0 1 2 2v5z" fill="#1476c8" />
          <path d="M7 19.500h10" stroke="#0b4f94" strokeWidth="1.500" />
        </svg>
      </Cell>
      <Cell>
        <svg viewBox="0 0 30 30" className="mb-[3px] ml-[2px] h-[30px] w-[30px]">
          <circle cx="14" cy="16" r="11.500" fill="#1493d2" stroke="#fff" strokeWidth="1.500" />
          <path d="M10.500 13c0-2.500 1.500-4 3.700-4s3.800 1.500 3.800 3.500c0 3-3.600 3-3.600 6.500" stroke="#fff" strokeWidth="2.800" fill="none" />
          <circle cx="14.300" cy="22" r="1.700" fill="#fff" />
          <circle cx="22.500" cy="7.500" r="7.500" fill="#fdb913" />
        </svg>
      </Cell>
      <Cell>
        <svg viewBox="0 0 24 26" className="h-[25px] w-[23px]">
          <path d="M1 1l11 5.500L23 1v18.500L12 25 1 19.500z" fill="#c22230" />
          <path d="M6 8.500l6 3 6-3V17l-6 3-6-3z" fill="#ecdfdf" />
        </svg>
      </Cell>
      <Cell>
        <div className="flex h-6 w-6 items-center justify-center bg-[#0c96d6] font-['Liberation_Sans'] text-[8px] tracking-[-0.4px] text-white italic">
          my<b className="text-[11px]">hp</b>
        </div>
      </Cell>
      <Cell dot="bg-[#8a8585]"><MobaLogo className="h-[25px] w-[25px]" /></Cell>
      <ChevronUp className="ml-[67px] h-[15px] w-[15px] text-[#222]" strokeWidth={2} />
      <div className="-mt-[1px] ml-[16px] w-[28px] text-center leading-[16px] tracking-[-0.2px]">
        <div>ENG</div>
        <div>IN</div>
      </div>
      <Wifi className="ml-[17px] h-[14px] w-[14px]" strokeWidth={2} />
      <Volume2 className="ml-[9px] h-4 w-4" strokeWidth={1.700} />
      <svg viewBox="0 0 16 13" className="ml-[8px] h-[13px] w-4">
        <rect x=".7" y="3.700" width="13" height="8.600" rx="1.500" fill="none" stroke="#222" strokeWidth="1.200" />
        <rect x="2.500" y="5.500" width="9.500" height="5" fill="#222" />
        <path d="M15.300 6.500v3" stroke="#222" strokeWidth="1.300" />
        <path d="M3.500 0L1 4.500h2L2 8l4-5H4z" fill="#222" stroke="#d9d9d9" strokeWidth=".5" />
      </svg>
      <div className="-mt-[3px] mr-[20px] ml-auto text-right leading-4">
        <div>12:56</div>
        <div>31-05-2025</div>
      </div>
    </div>
  );
}

export default function App() {
  return (
    <div className="flex h-[720px] w-[1280px] flex-col overflow-hidden bg-white font-['Noto_Sans',sans-serif]">
      <TitleBar />
      <MenuBar />
      <ToolBar />
      <TabRow />
      <div className="flex h-[537px]">
        <SideStrip />
        <div className="flex flex-1 flex-col border-b border-l border-[#93a5bd] bg-[#c9dfff]">
          <ActionBar />
          <div className="mr-[2px] ml-[3px] flex flex-col">
            <RemoteDesktop />
            <RemoteTaskbar />
          </div>
        </div>
      </div>
      <StatusBar />
      <HostTaskbar />
    </div>
  );
}
